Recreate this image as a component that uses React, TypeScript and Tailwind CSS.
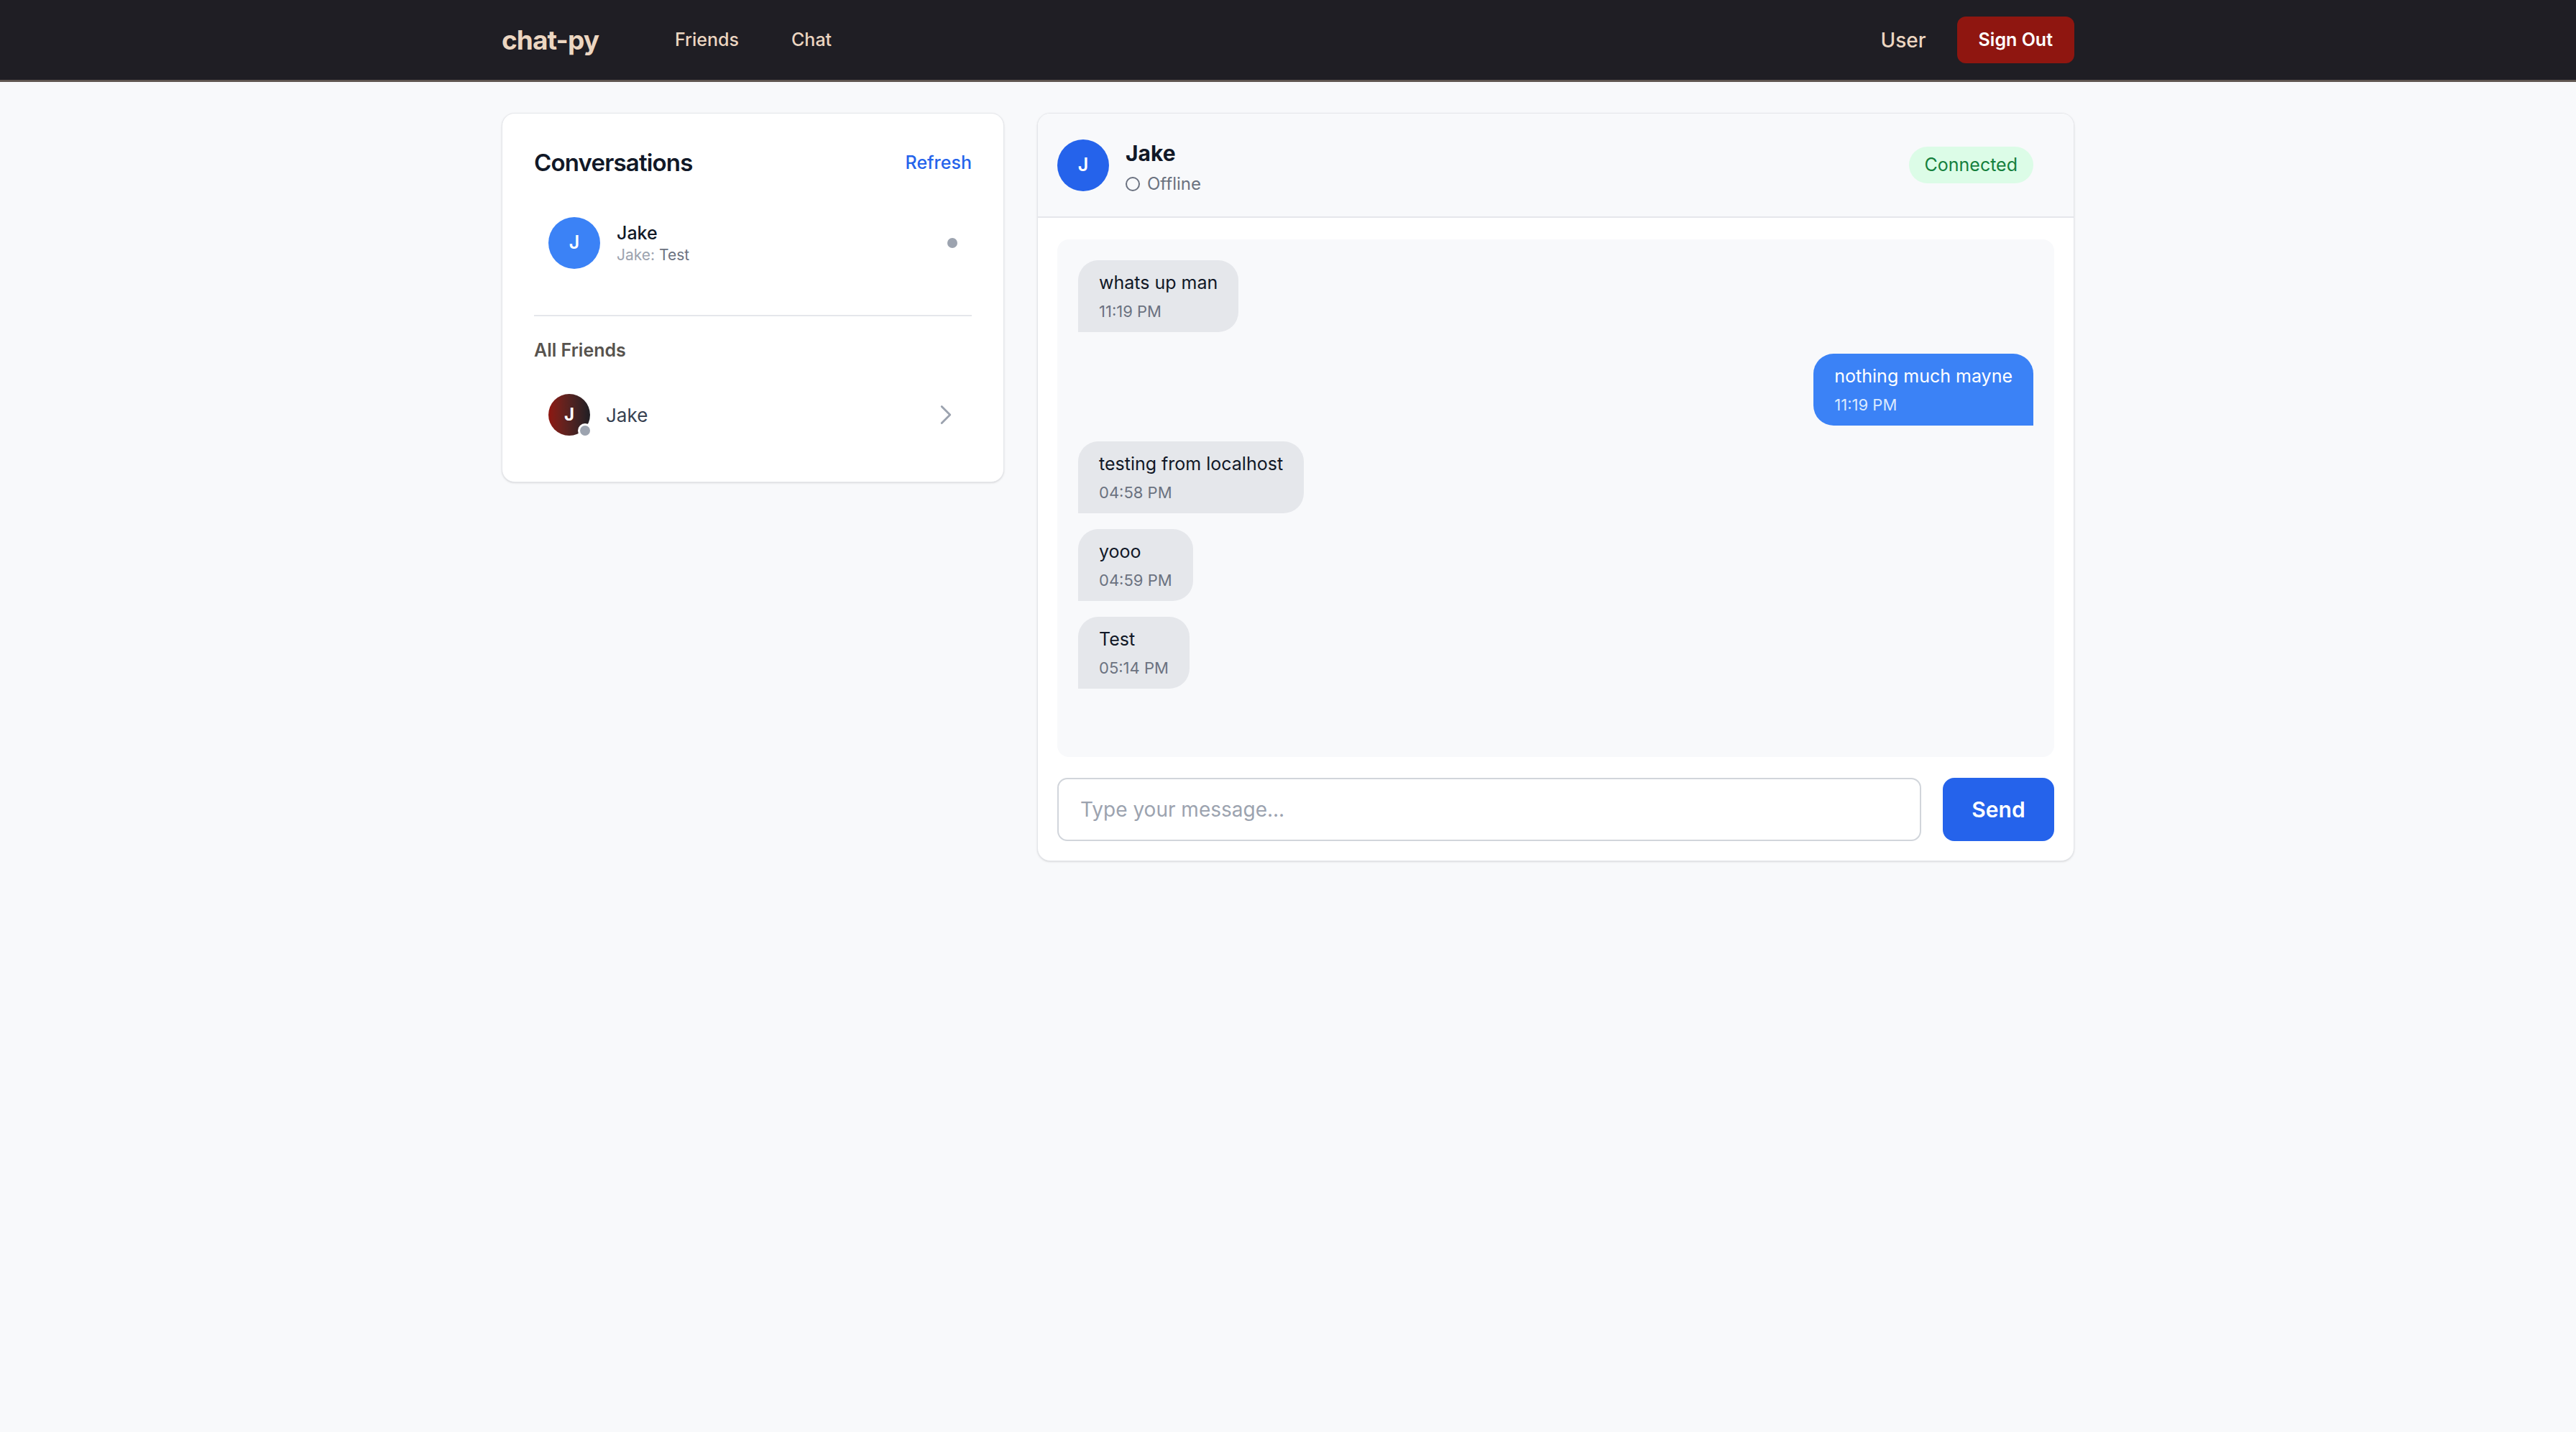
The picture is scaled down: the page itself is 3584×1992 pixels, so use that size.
import { ChevronRight } from 'lucide-react';

type Message = {
  id: number;
  text: string;
  time: string;
  mine: boolean;
};

const messages: Message[] = [
  { id: 1, text: 'whats up man', time: '11:19 PM', mine: false },
  { id: 2, text: 'nothing much mayne', time: '11:19 PM', mine: true },
  { id: 3, text: 'testing from localhost', time: '04:58 PM', mine: false },
  { id: 4, text: 'yooo', time: '04:59 PM', mine: false },
  { id: 5, text: 'Test', time: '05:14 PM', mine: false },
];

export default function App() {
  return (
    <div className="min-h-screen bg-[#f8f9fb] font-['Inter','Noto_Sans',sans-serif] text-[#111827]">
      {/* Top bar */}
      <nav className="h-[114px] bg-[#1f1e24] border-b-[3px] border-[#5f5650]">
        <div className="mx-auto w-[2188px] h-full flex items-center justify-between">
          <div className="flex items-center">
            <span className="w-[241px] text-[37px] font-bold tracking-tight text-[#ecd6c1]">chat-py</span>
            <div className="flex items-center gap-[73px] text-[25px] font-medium text-[#ecd6c1]">
              <a href="#">Friends</a>
              <a href="#">Chat</a>
            </div>
          </div>
          <div className="flex items-center gap-[43px]">
            <span className="text-[28px] font-medium text-[#ecd6c1]">User</span>
            <button className="h-[65px] px-[30px] rounded-[12px] bg-[#8f1610] text-white text-[25px] font-semibold">
              Sign Out
            </button>
          </div>
        </div>
      </nav>

      <main className="mx-auto w-[2188px] pt-[43px] grid grid-cols-[699px_1fr] gap-[46px] items-start">
        {/* Sidebar */}
        <aside className="bg-white border border-[#e5e7eb] rounded-[18px] shadow-sm px-[44px] pt-[47px] pb-[44px]">
          <div className="flex items-center justify-between h-[44px]">
            <h2 className="text-[33px] font-semibold tracking-tight">Conversations</h2>
            <button className="text-[25px] font-medium text-[#2563eb]">Refresh</button>
          </div>

          <div className="mt-[33px] flex items-center p-[20px] rounded-[16px]">
            <div className="w-[72px] h-[72px] rounded-full bg-[#3b82f6] flex items-center justify-center text-white text-[25px] font-semibold shrink-0">
              J
            </div>
            <div className="ml-[23px] flex-1">
              <div className="text-[25px] leading-[34px] font-medium text-[#111827]">Jake</div>
              <div className="text-[21px] leading-[28px]">
                <span className="text-[#9ca3af]">Jake: </span>
                <span className="text-[#6b7280]">Test</span>
              </div>
            </div>
            <span className="w-[14px] h-[14px] rounded-full bg-[#9ca3af]" />
          </div>

          <div className="mt-[44px] h-[2px] bg-[#e5e7eb]" />

          <h3 className="mt-[29px] text-[25px] leading-[36px] font-semibold text-[#57534e]">All Friends</h3>

          <div className="mt-[23px] flex items-center py-[20px] pl-[20px] pr-[13px] rounded-[16px]">
            <div className="relative w-[58px] h-[58px] shrink-0">
              <div className="w-full h-full rounded-full bg-linear-to-r from-[#8f1610] to-[#1f1e24] flex items-center justify-center text-white text-[24px] font-bold">
                J
              </div>
              <span className="absolute -right-[3px] -bottom-[3px] w-[20px] h-[20px] rounded-full bg-[#9ca3af] border-[3px] border-white" />
            </div>
            <span className="ml-[22px] flex-1 text-[26px] text-[#374151]">Jake</span>
            <ChevronRight className="w-[46px] h-[46px] text-[#9ca3af]" strokeWidth={1.5} />
          </div>
        </aside>

        {/* Chat panel */}
        <section className="bg-white border border-[#e5e7eb] rounded-[18px] shadow-sm overflow-hidden">
          <header className="h-[145px] bg-[#f8f9fb] border-b-2 border-[#e5e7eb] flex items-center justify-between pl-[27px] pr-[56px]">
            <div className="flex items-center">
              <div className="w-[72px] h-[72px] rounded-full bg-[#2563eb] flex items-center justify-center text-white text-[25px] font-semibold">
                J
              </div>
              <div className="ml-[23px] pt-[5px]">
                <div className="text-[30px] leading-[42px] font-bold text-[#111827]">Jake</div>
                <div className="mt-[6px] flex items-center gap-[10px] text-[24px] leading-[32px] text-[#6b7280]">
                  <span className="w-[20px] h-[20px] rounded-full border-[2.5px] border-[#6b7280]" />
                  Offline
                </div>
              </div>
            </div>
            <span className="h-[51px] px-[22px] rounded-full bg-[#dcfce7] text-[#15803d] text-[25px] flex items-center">
              Connected
            </span>
          </header>

          <div className="pt-[30px] pl-[27px] pr-[27px] pb-[27px]">
            <div className="h-[720px] rounded-[16px] bg-[#f8f9fb] p-[29px] flex flex-col gap-[22px]">
              {messages.map((m) => (
                <div
                  key={m.id}
                  className={
                    m.mine
                      ? 'self-end mt-[8px] rounded-[28px] rounded-br-none bg-[#3b82f6] px-[29px] py-[15px]'
                      : 'self-start rounded-[28px] rounded-bl-none bg-[#e5e7eb] px-[29px] py-[15px]'
                  }
                >
                  <div className={`text-[25px] leading-[32px] ${m.mine ? 'text-white' : 'text-[#111827]'}`}>{m.text}</div>
                  <div className={`mt-[10px] text-[22px] leading-[28px] ${m.mine ? 'text-[#dbeafe]' : 'text-[#6b7280]'}`}>
                    {m.time}
                  </div>
                </div>
              ))}
            </div>

            <div className="mt-[29px] flex items-center gap-[30px]">
              <input
                type="text"
                placeholder="Type your message..."
                className="flex-1 h-[88px] rounded-[14px] border-2 border-[#d1d5db] bg-white px-[30px] text-[28px] placeholder:text-[#9ca3af] outline-none"
              />
              <button className="w-[155px] h-[88px] rounded-[16px] bg-[#2563eb] text-white text-[30px] font-semibold">
                Send
              </button>
            </div>
          </div>
        </section>
      </main>
    </div>
  );
}
